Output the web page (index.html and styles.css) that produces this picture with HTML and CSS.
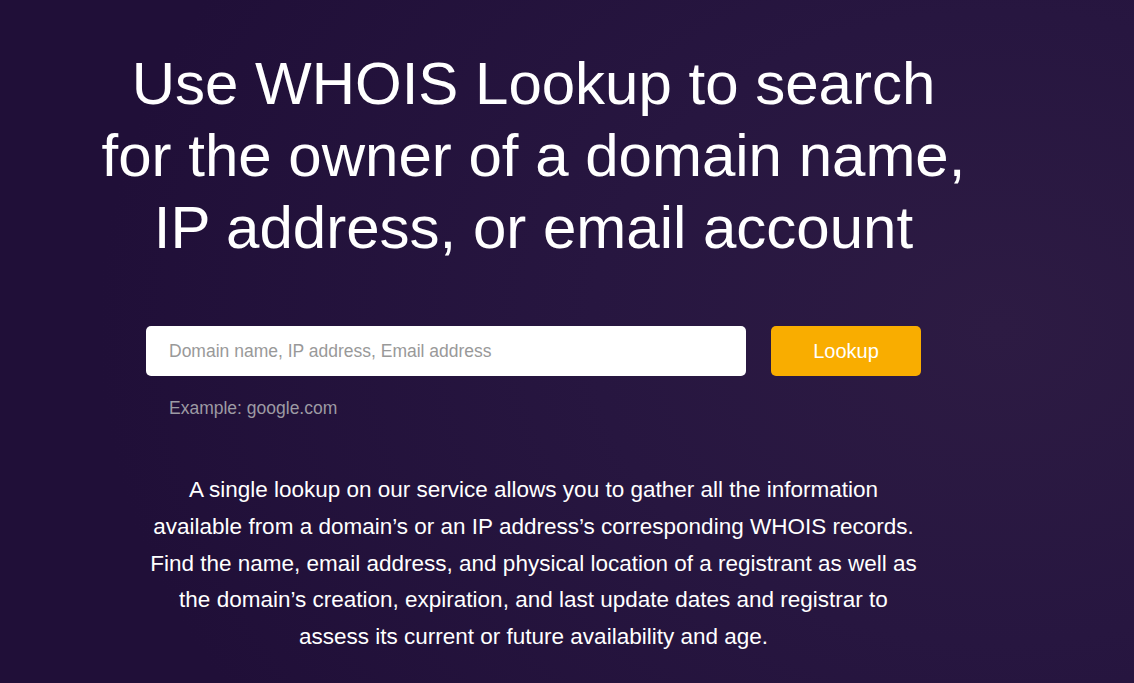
FILE: index.html
```html
<!DOCTYPE html>
<html lang="en">
<head>
<meta charset="utf-8">
<title>WHOIS Lookup</title>
<link rel="stylesheet" href="styles.css">
</head>
<body>
<main class="page">
  <section class="hero">
    <h1 class="hero-title">Use WHOIS Lookup to search for the owner of a domain name, IP address, or email account</h1>
    <div class="search">
      <form class="search-row" onsubmit="return false">
        <input class="search-input" type="text" placeholder="Domain name, IP address, Email address">
        <button class="search-button" type="submit">Lookup</button>
      </form>
      <p class="search-example">Example: google.com</p>
    </div>
    <p class="hero-text">A single lookup on our service allows you to gather all the information available from a domain’s or an IP address’s corresponding WHOIS records. Find the name, email address, and physical location of a registrant as well as the domain’s creation, expiration, and last update dates and registrar to assess its current or future availability and age.</p>
  </section>
</main>
</body>
</html>
```
FILE: styles.css
```css
html, body {
  margin: 0;
  padding: 0;
  height: 100%;
}
body {
  font-family: "Liberation Sans", Arial, sans-serif;
  color: #ffffff;
  background: radial-gradient(ellipse 900px 700px at 88% 48%, #2d1b43 0%, #271640 45%, #200f38 100%);
  background-color: #211038;
  overflow: hidden;
}
.page {
  box-sizing: border-box;
  height: 100%;
  padding: 48px 67px 0 0;
  display: flex;
  flex-direction: column;
  align-items: center;
}
.hero {
  display: flex;
  flex-direction: column;
  align-items: center;
  width: 775px;
}
.hero-title {
  margin: 0;
  width: 880px;
  flex-shrink: 0;
  font-size: 60px;
  line-height: 72px;
  font-weight: 400;
  text-align: center;
  color: #ffffff;
}
.search {
  margin-top: 62px;
  width: 775px;
}
.search-row {
  display: flex;
  gap: 25px;
  margin: 0;
}
.search-input {
  box-sizing: border-box;
  width: 600px;
  height: 50px;
  border: none;
  border-radius: 5px;
  background: #ffffff;
  padding: 0 23px;
  font-family: "Liberation Sans", Arial, sans-serif;
  font-size: 17.5px;
  color: #333;
  outline: none;
}
.search-input::placeholder {
  color: #999999;
}
.search-button {
  width: 150px;
  height: 50px;
  border: none;
  border-radius: 5px;
  background: #f9ad00;
  color: #ffffff;
  font-family: "Liberation Sans", Arial, sans-serif;
  font-size: 20px;
  cursor: pointer;
}
.search-example {
  margin: 22px 0 0 23px;
  font-size: 17.5px;
  line-height: 20px;
  color: #9d9aa3;
}
.hero-text {
  margin: 54px 0 0;
  width: 775px;
  font-size: 22.5px;
  line-height: 36.75px;
  text-align: center;
  color: #ffffff;
}
```
